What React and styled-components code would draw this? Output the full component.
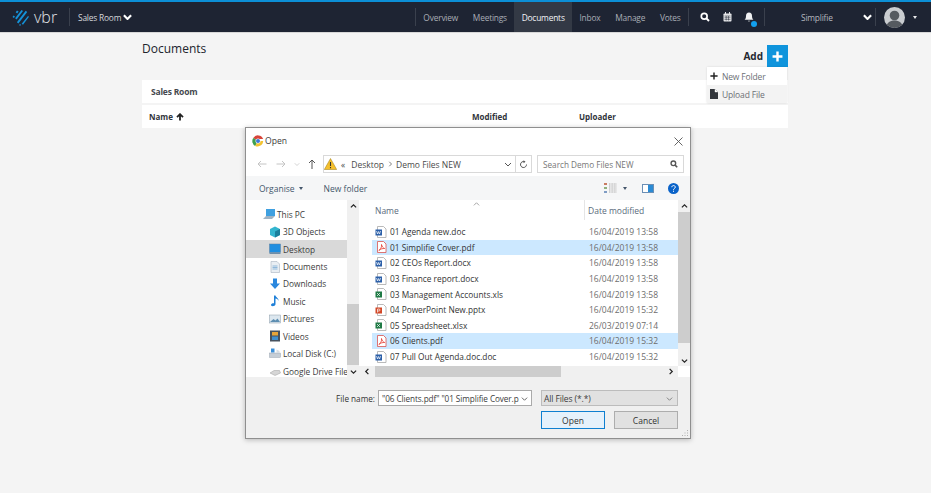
import React from "react";
import styled, { createGlobalStyle } from "styled-components";

const Global = createGlobalStyle`
  html, body { margin: 0; padding: 0; background: #f4f4f4; }
  body { font-family: "Open Sans", "Noto Sans", sans-serif; }
  * { box-sizing: border-box; }
`;

const Page = styled.div`
  position: relative;
  width: 931px;
  height: 493px;
  overflow: hidden;
  background: #f4f4f4;
`;

const TopBar = styled.header`
  display: flex;
  align-items: center;
  height: 33px;
  background: #1e2433;
  border-top: 2px solid #0c8fd6;
  border-bottom: 1px solid #d8d8d8;
  color: #b9bcc3;
  font-size: 8.4px;
  letter-spacing: -0.2px;
  white-space: nowrap;
`;
const Logo = styled.div`
  display: flex;
  flex: none;
  align-items: center;
  gap: 5px;
  width: 69px;
  height: 100%;
  padding-left: 12px;
`;
const LogoText = styled.span`
  font-size: 16px;
  font-weight: 300;
  color: #e4e6ea;
  letter-spacing: 0;
  line-height: 1;
`;
const Divider = styled.span`
  flex: none;
  width: 1px;
  height: 18px;
  background: #3a404d;
`;
const RoomMenu = styled.div`
  display: flex;
  flex: none;
  align-items: center;
  gap: 2px;
  margin-left: 8px;
  width: 337px;
  color: #d5d7db;
`;
const Nav = styled.nav`
  display: flex;
  flex: none;
  align-items: stretch;
  width: 272px;
  height: 100%;
`;
const NavItem = styled.div`
  display: flex;
  flex: 1 1 auto;
  align-items: center;
  justify-content: center;
  color: ${(p) => (p.$active ? "#f2f3f5" : "#a9adb5")};
  background: ${(p) => (p.$active ? "#333945" : "transparent")};
`;
const NavGroup = styled.div`
  display: flex;
  flex: none;
  align-items: center;
  height: 100%;
  padding: 0 4px 0 5px;
`;
const ToolIcon = styled.span`
  position: relative;
  display: flex;
  width: 22px;
  justify-content: center;
`;
const Dot = styled.span`
  position: absolute;
  right: 3px;
  bottom: -4px;
  width: 6px;
  height: 6px;
  border-radius: 50%;
  background: #12a0ee;
`;
const Org = styled.div`
  display: flex;
  flex: none;
  align-items: center;
  width: 110px;
  padding-left: 36px;
  gap: 30px;
  color: #b4b8bf;
`;
const Avatar = styled.div`
  flex: none;
  width: 21px;
  height: 21px;
  margin-left: 8px;
  border-radius: 50%;
  background: #c9ccd0;
  overflow: hidden;
`;
const Caret = styled.span`
  margin-left: 8px;
  width: 0;
  height: 0;
  border-left: 2.5px solid transparent;
  border-right: 2.5px solid transparent;
  border-top: 3px solid #e8e9eb;
`;

const Main = styled.main`
  width: 646px;
  margin-left: 142px;
`;
const Head = styled.div`
  display: flex;
  justify-content: space-between;
  height: 47px;
`;
const Title = styled.h1`
  margin: 7px 0 0;
  font-size: 12px;
  line-height: 18px;
  font-weight: 400;
  color: #20242d;
`;
const AddWrap = styled.div`
  position: relative;
  display: flex;
  align-items: center;
  gap: 4px;
  height: 22px;
  margin-top: 12px;
`;
const AddLabel = styled.span`
  font-size: 10px;
  font-weight: 700;
  color: #252830;
`;
const AddButton = styled.div`
  display: flex;
  align-items: center;
  justify-content: center;
  width: 21px;
  height: 22px;
  background: #0f94dc;
`;
const Menu = styled.div`
  position: absolute;
  top: 22px;
  right: 1px;
  width: 80px;
  background: #fff;
  z-index: 2;
  box-shadow: 0 0 2px rgba(0, 0, 0, 0.12);
`;
const MenuItem = styled.div`
  display: flex;
  align-items: center;
  gap: 4px;
  height: 18px;
  padding-left: 3px;
  font-size: 8.5px;
  letter-spacing: -0.15px;
  color: #6d7076;
  white-space: nowrap;
  background: ${(p) => (p.$hover ? "#f3f3f3" : "#fff")};
`;
const PanelRow = styled.div`
  display: flex;
  align-items: center;
  height: 23px;
  margin-bottom: 2px;
  background: #fff;
  font-size: 8px;
  font-weight: 700;
  color: #30343b;
`;
const RoomName = styled.span`
  padding-left: 9px;
  color: #45484e;
  font-size: 8.5px;
  letter-spacing: -0.2px;
`;
const Col = styled.span`
  display: flex;
  align-items: center;
  gap: 3px;
  width: ${(p) => p.$w}px;
  padding-left: ${(p) => p.$pl || 0}px;
`;

const Dialog = styled.section`
  position: absolute;
  left: 245px;
  top: 127px;
  width: 446px;
  height: 312px;
  display: flex;
  flex-direction: column;
  background: #fff;
  border: 1px solid #8f8f8f;
  box-shadow: 0 1px 5px rgba(0, 0, 0, 0.25);
  font-size: 8.5px;
  color: #3c3c3c;
  z-index: 3;
`;
const TitleBar = styled.div`
  display: flex;
  align-items: center;
  justify-content: space-between;
  height: 26px;
  padding: 0 7px 0 6px;
  font-size: 8.6px;
`;
const TitleLeft = styled.div`
  display: flex;
  align-items: center;
  gap: 1px;
`;
const AddressRow = styled.div`
  display: flex;
  align-items: center;
  height: 22px;
  padding: 0 6px 2px 0;
`;
const Arrows = styled.div`
  display: flex;
  align-items: center;
  gap: 0;
  width: 77px;
  padding-left: 8px;
`;
const Arrow = styled.span`
  display: flex;
  justify-content: center;
  width: ${(p) => p.$w}px;
`;
const Crumb = styled.div`
  display: flex;
  align-items: center;
  width: 193px;
  height: 18px;
  border: 1px solid #d9d9d9;
  gap: 3px;
  color: #4a4a4a;
`;
const CrumbText = styled.span`
  margin-left: ${(p) => p.$ml || 0}px;
  flex: ${(p) => (p.$grow ? 1 : "none")};
`;
const Refresh = styled.div`
  display: flex;
  align-items: center;
  justify-content: center;
  width: 16px;
  height: 18px;
  border: 1px solid #d9d9d9;
  border-left: 0;
`;
const Search = styled.div`
  display: flex;
  align-items: center;
  justify-content: space-between;
  width: 147px;
  height: 18px;
  margin-left: 5px;
  padding: 0 5px;
  border: 1px solid #d9d9d9;
  color: #777;
  font-size: 8.2px;
`;
const ToolRow = styled.div`
  display: flex;
  align-items: center;
  height: 24px;
  background: #f5f6f7;
  color: #44566b;
`;
const ToolBtn = styled.span`
  display: flex;
  align-items: center;
  gap: 3px;
  margin-left: ${(p) => p.$ml}px;
`;
const Body = styled.div`
  display: flex;
  height: 177px;
`;
const Tree = styled.div`
  width: 101px;
  padding-top: 5.5px;
  overflow: hidden;
  font-size: 8.3px;
`;
const TreeItem = styled.div`
  display: flex;
  align-items: center;
  gap: 0;
  height: 17.45px;
  padding-left: ${(p) => (p.$root ? 17 : 23)}px;
  white-space: nowrap;
  overflow: hidden;
  background: ${(p) => (p.$sel ? "#d9d9d9" : "transparent")};
`;
const VBar = styled.div`
  flex: none;
  display: flex;
  flex-direction: column;
  width: 12px;
  height: 100%;
  background: #f0f0f0;
`;
const BarArrow = styled.span`
  display: flex;
  flex: none;
  align-items: center;
  justify-content: center;
  height: 12px;
`;
const Thumb = styled.div`
  flex: ${(p) => p.$f};
  background: ${(p) => (p.$on ? "#cdcdcd" : "transparent")};
`;
const ListArea = styled.div`
  flex: 1;
  display: flex;
  flex-direction: column;
  min-width: 0;
`;
const ListMain = styled.div`
  flex: 1;
  display: flex;
  min-height: 0;
`;
const Files = styled.div`
  flex: 1;
  padding-left: 13px;
  min-width: 0;
`;
const ColHead = styled.div`
  position: relative;
  display: flex;
  align-items: center;
  height: 24px;
  padding-bottom: 4px;
  color: #5a6b7c;
`;
const NameHead = styled.span`
  flex: none;
  width: 213px;
  padding-left: 3px;
  height: 20px;
  display: flex;
  align-items: center;
  border-right: 1px solid #e5e5e5;
`;
const DateHead = styled.span`
  padding-left: 3px;
`;
const SortMark = styled.span`
  position: absolute;
  left: 101px;
  top: -1px;
`;
const FileRow = styled.div`
  display: grid;
  grid-template-columns: 217px 1fr;
  align-items: center;
  height: 15.6px;
  background: ${(p) => (p.$sel ? "#cce8ff" : "transparent")};
`;
const FileName = styled.span`
  display: flex;
  align-items: center;
  gap: 3px;
  padding-left: 3px;
  color: #333;
  font-size: 8.3px;
  white-space: nowrap;
`;
const FileDate = styled.span`
  color: #6d6d6d;
`;
const HBar = styled.div`
  flex: none;
  display: flex;
  align-items: center;
  height: 11px;
  margin-right: 12px;
  background: #f0f0f0;
`;
const HArrow = styled.span`
  flex: none;
  display: flex;
  justify-content: center;
  width: 16px;
`;
const HThumb = styled.div`
  width: 186px;
  height: 100%;
  background: #cdcdcd;
`;
const HTrack = styled.div`
  flex: 1;
`;
const Footer = styled.div`
  flex: 1;
  display: grid;
  grid-template-columns: 132px 154px 137px;
  grid-template-rows: 16px 18px;
  row-gap: 5px;
  padding-top: 13px;
  background: #f0f0f0;
  position: relative;
`;
const FieldLabel = styled.span`
  display: flex;
  align-items: center;
  justify-content: flex-end;
  padding-right: 3px;
  color: #333;
  font-size: 8.2px;
`;
const NameInput = styled.div`
  display: flex;
  align-items: center;
  justify-content: space-between;
  padding: 0 3px;
  background: #fff;
  border: 1px solid #aaa;
  white-space: nowrap;
  overflow: hidden;
  font-size: 8.2px;
  letter-spacing: -0.08px;
`;
const TypeSelect = styled.div`
  display: flex;
  align-items: center;
  justify-content: space-between;
  margin-left: 9px;
  width: 137px;
  padding: 0 4px 0 2px;
  background: #e1e1e1;
  border: 1px solid #bcbcbc;
  font-size: 8.5px;
  letter-spacing: -0.1px;
`;
const Buttons = styled.div`
  grid-column: 3;
  display: flex;
  gap: 9px;
  margin-left: 9px;
  width: 137px;
`;
const DlgButton = styled.div`
  display: flex;
  align-items: center;
  justify-content: center;
  width: 64px;
  background: ${(p) => (p.$primary ? "#e5f1fb" : "#e1e1e1")};
  border: 1px solid ${(p) => (p.$primary ? "#0f7fd0" : "#adadad")};
  color: #333;
`;
const Grip = styled.svg`
  position: absolute;
  right: 1px;
  bottom: 1px;
`;

const Chevron = ({ c = "#fff", w = 9 }) => (
  <svg width={w} height={w * 0.7} viewBox="0 0 10 7"><path d="M1 1.5l4 4 4-4" fill="none" stroke={c} strokeWidth="2.4" /></svg>
);
const VbrMark = () => (
  <svg width="17" height="17" viewBox="0 0 17 17" fill="#1492d8">
    <path d="M5 1.5l1.6 1.1L5.2 4.4 3.7 3.3zM9.5 1l1.5 1-6.4 8.4-1.5-1.1zM13.7 1.8l1.5 1.1-8.8 11.5-1.5-1.1zM1.5 6.5L3 7.6 1.9 9 .5 8zM16 7l1 .8-6 7.9-1.3-1zM8 15l1 .8-.9 1.1-1-.8z" />
  </svg>
);
const SearchIcon = ({ c = "#fff", s = 10 }) => (
  <svg width={s} height={s} viewBox="0 0 10 10" fill="none"><circle cx="4.2" cy="4.2" r="2.9" stroke={c} strokeWidth="1.7" /><path d="M6.4 6.4L9 9" stroke={c} strokeWidth="2" /></svg>
);
const CalendarIcon = () => (
  <svg width="9" height="10" viewBox="0 0 9 10"><rect x=".5" y="1.5" width="8" height="8" rx=".8" fill="#e4e5e8" /><path d="M2.5 0v2.5M6.5 0v2.5" stroke="#e4e5e8" /><path d="M1.5 4h6M1.5 5.7h6M1.5 7.4h6M3.2 4v4.5M5.5 4v4.5" stroke="#1e2433" strokeWidth=".5" /></svg>
);
const BellIcon = () => (
  <svg width="10" height="11" viewBox="0 0 10 11"><path d="M5 .5c2 0 3 1.5 3 3.5 0 2 .5 3 1.5 3.8H.5C1.5 7 2 6 2 4 2 2 3 .5 5 .5zM3.8 8.8h2.4C6 9.8 4 9.8 3.8 8.8z" fill="#f0f1f3" /></svg>
);
const AvatarArt = () => (
  <svg width="21" height="21" viewBox="0 0 21 21"><circle cx="10.5" cy="8.5" r="4.8" fill="#555a60" /><path d="M2 21c.5-5.5 4-7.5 8.5-7.5S18.5 15.5 19 21z" fill="#555a60" /></svg>
);
const Plus = ({ c = "#fff", s = 10, w = 2.2 }) => (
  <svg width={s} height={s} viewBox="0 0 10 10"><path d="M5 .5v9M.5 5h9" stroke={c} strokeWidth={w} /></svg>
);
const ArrowUp = () => (
  <svg width="8" height="8" viewBox="0 0 8 8"><path d="M4 7.5V1.5M1 4.2L4 1.2l3 3" fill="none" stroke="#222" strokeWidth="1.8" /></svg>
);
const FileGlyph = () => (
  <svg width="8" height="10" viewBox="0 0 8 10"><path d="M0 0h5l3 3v7H0z" fill="#33363c" /><path d="M5 0v3h3" fill="#fff" stroke="#fff" strokeWidth=".4" /></svg>
);
const ChromeIcon = () => (
  <svg width="12" height="12" viewBox="0 0 12 12">
    <path d="M6 6L1.2 3A5.6 5.6 0 0 1 11.2 4H6z" fill="#d8453a" />
    <path d="M6 6l-2.8 4.9A5.6 5.6 0 0 1 1.2 3z" fill="#3d9f50" />
    <path d="M6 6h5.2A5.6 5.6 0 0 1 3.2 10.9z" fill="#f3c330" />
    <circle cx="6" cy="6" r="2.5" fill="#fff" /><circle cx="6" cy="6" r="2" fill="#3b78d8" />
  </svg>
);
const CloseX = () => (
  <svg width="9" height="9" viewBox="0 0 9 9"><path d="M.5.5l8 8M8.5.5l-8 8" stroke="#555" strokeWidth=".9" /></svg>
);
const HArr = ({ dir, c }) => (
  <svg width="10" height="8" viewBox="0 0 10 8" style={{ transform: dir === "r" ? "scaleX(-1)" : "none" }}><path d="M9.5 4H1M4 1L1 4l3 3" fill="none" stroke={c} strokeWidth="1" /></svg>
);
const UpArr = () => (
  <svg width="8" height="10" viewBox="0 0 8 10"><path d="M4 10V1M1 4l3-3 3 3" fill="none" stroke="#555" strokeWidth="1" /></svg>
);
const Warn = () => (
  <svg width="13" height="12" viewBox="0 0 13 12"><path d="M6.5.5L12.7 11.5H.3z" fill="#f5c02d" stroke="#9a7a18" strokeWidth=".5" /><path d="M6.5 4v4M6.5 9v1.2" stroke="#333" strokeWidth="1.1" /></svg>
);
const Small = ({ up, left, right, c = "#555", s = 7, sw = 1 }) => {
  const d = up ? "M1 5l3-3 3 3" : left ? "M5 1L2 4l3 3" : right ? "M3 1l3 3-3 3" : "M1 3l3 3 3-3";
  return <svg width={s} height={s} viewBox="0 0 8 8"><path d={d} fill="none" stroke={c} strokeWidth={sw} /></svg>;
};
const RefreshIcon = () => (
  <svg width="9" height="9" viewBox="0 0 9 9"><path d="M7.5 4.5A3 3 0 1 1 5.5 1.7" fill="none" stroke="#555" strokeWidth="1" /><path d="M4.5.2l2 1.5-2 1.5z" fill="#555" /></svg>
);
const ViewIcon = () => (
  <svg width="14" height="10" viewBox="0 0 14 10"><rect width="3" height="2" y="0" fill="#c97b62" /><rect width="3" height="2" y="4" fill="#8fb07c" /><rect width="3" height="2" y="8" fill="#7f9cc4" /><path d="M5 1h8M5 3h8M5 5h8M5 7h8M5 9h8" stroke="#a9a9a9" strokeDasharray="1 .6" /></svg>
);
const PaneIcon = () => (
  <svg width="12" height="9" viewBox="0 0 12 9"><rect x=".5" y=".5" width="11" height="8" fill="#fff" stroke="#6b8fb5" /><rect x="6" y="1" width="5" height="7" fill="#2a8ad4" /></svg>
);
const HelpIcon = () => (
  <svg width="11" height="11" viewBox="0 0 11 11"><circle cx="5.5" cy="5.5" r="5.5" fill="#0a63c9" /><path d="M3.8 4.2c0-2.2 3.5-2.2 3.5 0 0 1.3-1.8 1.2-1.8 2.6" fill="none" stroke="#fff" strokeWidth="1" /><rect x="5" y="7.7" width="1" height="1.1" fill="#fff" /></svg>
);

const FileIcon = ({ kind }) => {
  const map = {
    word: ["#2b5fa8", "W"],
    pdf: ["#e2382e", ""],
    xls: ["#1f7a45", "X"],
    ppt: ["#d24726", "P"],
  };
  const [c, l] = map[kind];
  return (
    <svg width="12" height="12" viewBox="0 0 12 12" style={{ flex: "none" }}>
      <path d="M2.5.5h6l2.500 2.500v8.500H2.500z" fill="#fff" stroke={kind === "pdf" ? "#d9534f" : "#a8a8a8"} strokeWidth=".8" />
      {kind === "pdf" ? (
        <path d="M3.8 9.5c2-1 3-3.5 2.700-6 .6 2.200 1.500 3.500 3.200 4-2-.1-4 .3-5.900 2z" fill="none" stroke={c} strokeWidth=".8" />
      ) : (
        <g>
          <rect x=".5" y="3.5" width="6.5" height="6" fill={c} />
          <path d={l === "W" ? "M1.5 5l1 3 1-2.500 1 2.500 1-3" : l === "X" ? "M2 5l3 3M5 5l-3 3" : "M2.5 8.5V5h1.500a1 1 0 0 1 0 2H2.500"} fill="none" stroke="#fff" strokeWidth=".7" />
        </g>
      )}
    </svg>
  );
};

const TreeIcon = ({ kind }) => {
  const art = {
    pc: <g><rect x="3" y="1" width="9" height="7" fill="#3fa0e0" /><path d="M0 11l3-3h9l-3 3z" fill="#9fb3c4" /></g>,
    cube: <g><path d="M6 .5l5 2.5v6l-5 2.5-5-2.5v-6z" fill="#33b5cf" /><path d="M6 5.5l5-2.5v6l-5 2.5z" fill="#1a7f9c" /></g>,
    desk: <g><rect x=".5" y="1" width="11" height="8.5" fill="#1f8ee0" stroke="#5b7f9f" strokeWidth=".5" /><rect x=".5" y="9.5" width="11" height="1.5" fill="#6f8ea8" /></g>,
    docs: <g><path d="M2 .5h6l2.5 2.5v8.500H2z" fill="#e9eef3" stroke="#a8b4c0" strokeWidth=".6" /><path d="M3.5 5h5M3.5 6.5h5M3.5 8h5" stroke="#6aa0d0" strokeWidth=".7" /></g>,
    down: <path d="M4 .5h4v5h3L6 11 1 5.5h3z" fill="#2a88de" />,
    music: <path d="M5 .5h1.5c.3 2 3.5 2.5 3 5.5-.3-1.5-1.5-2.3-3-2.5v5.700c0 2-4.5 2.800-4.500.8 0-1.600 2-2 3-1.700z" fill="#1f80d8" />,
    pics: <g><rect x=".5" y="2" width="11" height="8" fill="#dce7ef" stroke="#8a9aa8" strokeWidth=".5" /><path d="M1 9l3.5-3 2 1.5 2-2L11 9z" fill="#5e8fb2" /></g>,
    vid: <g><rect x="1" y=".5" width="10" height="11" fill="#46525f" /><rect x="3" y="2" width="6" height="3.5" fill="#e6a53a" /><rect x="3" y="6.5" width="6" height="3.5" fill="#3f8fcf" /></g>,
    disk: <g><rect x=".5" y="5" width="11" height="4.5" fill="#c6ced6" stroke="#8a98a5" strokeWidth=".4" /><path d="M2 .5h3.5v4H2z" fill="#3a8fd8" /><path d="M7.5 1.500l3 1.500v2h-3z" fill="#d7dde3" /></g>,
    drive: <g><path d="M1 8l4-2.500h5.500L11.500 8 6 10.500z" fill="#d6d6d6" stroke="#8a8a8a" strokeWidth=".4" /></g>,
  };
  return <svg width="12" height="12" viewBox="0 0 12 12" style={{ flex: "none", marginRight: 2 }}>{art[kind]}</svg>;
};

const tree = [
  ["pc", "This PC", true],
  ["cube", "3D Objects"],
  ["desk", "Desktop", false, true],
  ["docs", "Documents"],
  ["down", "Downloads"],
  ["music", "Music"],
  ["pics", "Pictures"],
  ["vid", "Videos"],
  ["disk", "Local Disk (C:)"],
  ["drive", "Google Drive File"],
];
const files = [
  ["word", "01 Agenda new.doc", "16/04/2019 13:58"],
  ["pdf", "01 Simplifie Cover.pdf", "16/04/2019 13:58", true],
  ["word", "02 CEOs Report.docx", "16/04/2019 13:58"],
  ["word", "03 Finance report.docx", "16/04/2019 13:58"],
  ["xls", "03 Management Accounts.xls", "16/04/2019 13:58"],
  ["ppt", "04 PowerPoint New.pptx", "16/04/2019 15:32"],
  ["xls", "05 Spreadsheet.xlsx", "26/03/2019 07:14"],
  ["pdf", "06 Clients.pdf", "16/04/2019 15:32", true],
  ["word", "07 Pull Out Agenda.doc.doc", "16/04/2019 15:32"],
];

export default function App() {
  return (
    <Page>
      <Global />
      <TopBar>
        <Logo><VbrMark /><LogoText>vbr</LogoText></Logo>
        <Divider />
        <RoomMenu>Sales Room <Chevron /></RoomMenu>
        <Divider />
        <Nav>
          <NavItem>Overview</NavItem>
          <NavItem>Meetings</NavItem>
          <NavItem $active>Documents</NavItem>
          <NavItem>Inbox</NavItem>
          <NavItem>Manage</NavItem>
          <NavItem>Votes</NavItem>
        </Nav>
        <Divider />
        <NavGroup>
          <ToolIcon><SearchIcon /></ToolIcon>
          <ToolIcon><CalendarIcon /></ToolIcon>
          <ToolIcon><BellIcon /><Dot /></ToolIcon>
        </NavGroup>
        <Divider />
        <Org>Simplifie <Chevron /></Org>
        <Divider />
        <Avatar><AvatarArt /></Avatar>
        <Caret />
      </TopBar>
      <Main>
        <Head>
          <Title>Documents</Title>
          <AddWrap>
            <AddLabel>Add</AddLabel>
            <AddButton><Plus s={11} /></AddButton>
            <Menu>
              <MenuItem><Plus c="#222" s={8} w={1.8} /> New Folder</MenuItem>
              <MenuItem $hover><FileGlyph /> Upload File</MenuItem>
            </Menu>
          </AddWrap>
        </Head>
        <PanelRow><RoomName>Sales Room</RoomName></PanelRow>
        <PanelRow>
          <Col $w={330} $pl={7}>Name <ArrowUp /></Col>
          <Col $w={107}>Modified</Col>
          <Col $w={100}>Uploader</Col>
        </PanelRow>
      </Main>
      <Dialog>
        <TitleBar>
          <TitleLeft><ChromeIcon /> Open</TitleLeft>
          <CloseX />
        </TitleBar>
        <AddressRow>
          <Arrows>
            <Arrow $w={16}><HArr c="#c4c4c4" /></Arrow>
            <Arrow $w={22}><HArr dir="r" c="#c4c4c4" /></Arrow>
            <Arrow $w={10}><Small c="#c4c4c4" s={6} /></Arrow>
            <Arrow $w={20}><UpArr /></Arrow>
          </Arrows>
          <Crumb>
            <Warn />
            <CrumbText $ml={1}>«</CrumbText>
            <CrumbText $ml={3}>Desktop</CrumbText>
            <Small right s={6} />
            <CrumbText $grow>Demo Files NEW</CrumbText>
            <Small s={8} />
            <CrumbText />
          </Crumb>
          <Refresh><RefreshIcon /></Refresh>
          <Search>Search Demo Files NEW <SearchIcon c="#555" s={8} /></Search>
        </AddressRow>
        <ToolRow>
          <ToolBtn $ml={13}>Organise <Caret style={{ marginLeft: 1, borderTopColor: "#44566b" }} /></ToolBtn>
          <ToolBtn $ml={21}>New folder</ToolBtn>
          <ToolBtn $ml={237}><ViewIcon /><Caret style={{ marginLeft: 2, borderTopColor: "#44566b" }} /></ToolBtn>
          <ToolBtn $ml={15}><PaneIcon /></ToolBtn>
          <ToolBtn $ml={14}><HelpIcon /></ToolBtn>
        </ToolRow>
        <Body>
          <Tree>
            {tree.map(([k, t, root, sel]) => (
              <TreeItem key={t} $root={root} $sel={sel}><TreeIcon kind={k} />{t}</TreeItem>
            ))}
          </Tree>
          <VBar>
            <BarArrow><Small up c="#222" sw={1.4} /></BarArrow>
            <Thumb $f={84} />
            <Thumb $f={55} $on />
            <BarArrow><Small c="#222" sw={1.4} /></BarArrow>
          </VBar>
          <ListArea>
            <ListMain>
              <Files>
                <ColHead>
                  <NameHead>Name</NameHead>
                  <SortMark><Small up c="#999" s={7} /></SortMark>
                  <DateHead>Date modified</DateHead>
                </ColHead>
                {files.map(([k, n, d, sel]) => (
                  <FileRow key={n} $sel={sel}>
                    <FileName><FileIcon kind={k} />{n}</FileName>
                    <FileDate>{d}</FileDate>
                  </FileRow>
                ))}
              </Files>
              <VBar>
                <BarArrow><Small up c="#222" sw={1.4} /></BarArrow>
                <Thumb $f={131} $on />
                <Thumb $f={11} />
                <BarArrow><Small c="#222" sw={1.4} /></BarArrow>
              </VBar>
            </ListMain>
            <HBar>
              <HArrow><Small left c="#222" sw={1.4} /></HArrow>
              <HThumb />
              <HTrack />
              <HArrow><Small right c="#222" sw={1.4} /></HArrow>
            </HBar>
          </ListArea>
        </Body>
        <Footer>
          <FieldLabel>File name:</FieldLabel>
          <NameInput>"06 Clients.pdf" "01 Simplifie Cover.p<Small s={7} /></NameInput>
          <TypeSelect>All Files (*.*) <Small s={7} c="#777" /></TypeSelect>
          <Buttons>
            <DlgButton $primary>Open</DlgButton>
            <DlgButton>Cancel</DlgButton>
          </Buttons>
          <Grip width="8" height="8" viewBox="0 0 8 8" fill="#b0b0b0"><rect x="6" y="6" width="1" height="1" /><rect x="3.5" y="6" width="1" height="1" /><rect x="1" y="6" width="1" height="1" /><rect x="6" y="3.5" width="1" height="1" /><rect x="3.5" y="3.5" width="1" height="1" /><rect x="6" y="1" width="1" height="1" /></Grip>
        </Footer>
      </Dialog>
    </Page>
  );
}
